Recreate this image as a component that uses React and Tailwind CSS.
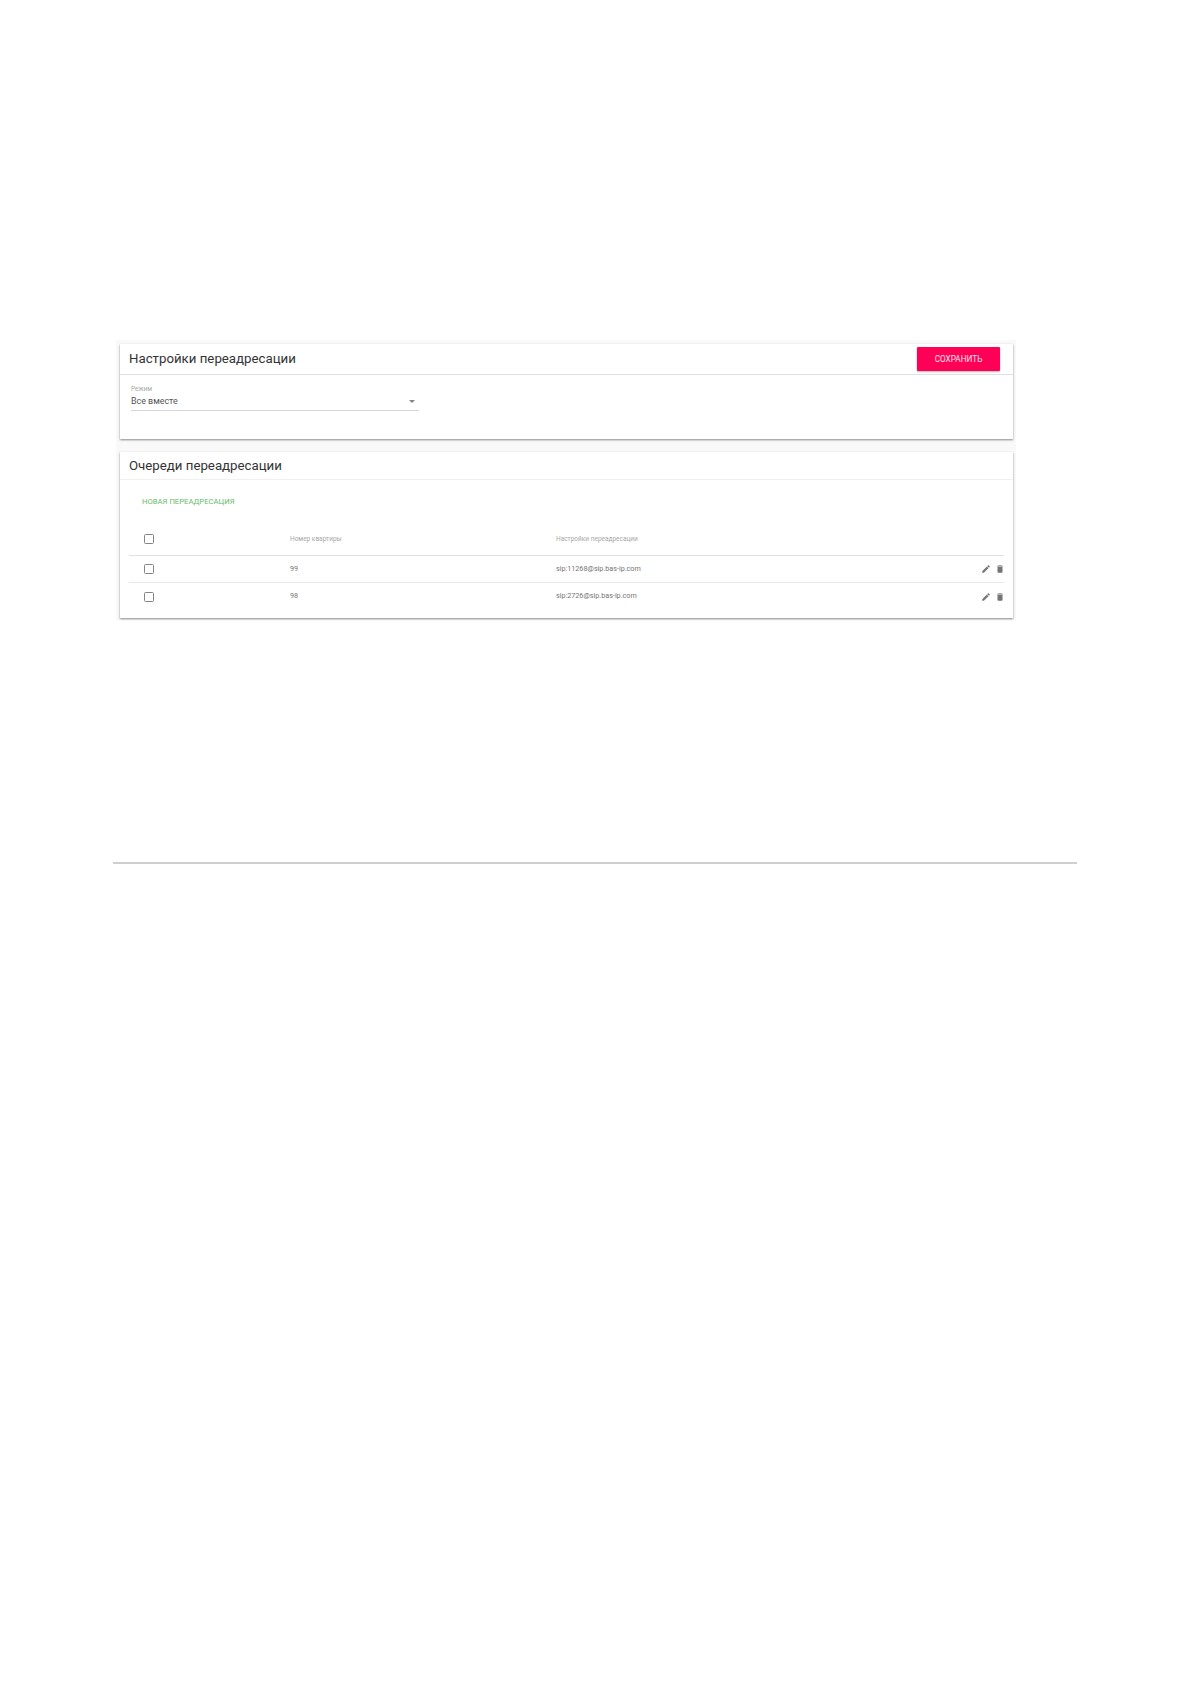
import React from 'react';

const rows = [
  { flat: '99', target: 'sip:11268@sip.bas-ip.com' },
  { flat: '98', target: 'sip:2726@sip.bas-ip.com' },
];

function Checkbox() {
  return <div className="w-[10px] h-[10px] rounded-[1.5px] border-[1.5px] border-[#858585]" />;
}

function EditIcon() {
  return (
    <svg viewBox="0 0 24 24" className="w-[10px] h-[10px]" fill="#757575">
      <path d="M3 17.25V21h3.75L17.81 9.94l-3.75-3.75L3 17.25zM20.71 7.04a1 1 0 0 0 0-1.41l-2.34-2.34a1 1 0 0 0-1.41 0l-1.83 1.83 3.75 3.75 1.83-1.83z" />
    </svg>
  );
}

function TrashIcon() {
  return (
    <svg viewBox="0 0 24 24" className="w-[10px] h-[10px]" fill="#757575">
      <path d="M6 19c0 1.1.9 2 2 2h8c1.1 0 2-.9 2-2V7H6v12zM19 4h-3.5l-1-1h-5l-1 1H5v2h14V4z" />
    </svg>
  );
}

export default function App() {
  return (
    <div className="min-h-[1684px] bg-white font-['Roboto',sans-serif] pt-[340px]">
      <div className="ml-[116px] w-[900px] h-[280px] bg-[#f9f9f9] pl-1 pr-[3px] pt-1">
        {/* Settings */}
        <div className="h-[95px] bg-white shadow-[0_1px_2px_rgba(0,0,0,0.45)]">
          <div className="h-[31px] flex items-center justify-between pl-[9px] pr-[13px] border-b border-[#e0e0e0]">
            <h2 className="text-[13.25px] font-normal text-[#333333]">Настройки переадресации</h2>
            <button
              type="button"
              className="w-[83px] h-[24px] bg-[#ff0057] text-[#ffe4ec] text-[8.2px] uppercase rounded-[1px] shadow-[0_1px_2px_rgba(0,0,0,0.3)]"
            >
              Сохранить
            </button>
          </div>
          <div className="ml-[11px] w-[288px] mt-[10px] border-b border-[#d6d6d6] h-[26px]">
            <div className="text-[6.5px] leading-[8px] text-[#a8a8a8]">Режим</div>
            <div className="flex items-center justify-between pr-[4px] h-[16px]">
              <span className="text-[8.9px] text-[#555555] pt-[2px]">Все вместе</span>
              <span className="w-0 h-0 border-x-[3px] border-x-transparent border-t-[3px] border-t-[#858585]" />
            </div>
          </div>
        </div>

        {/* Queues */}
        <div className="mt-[13px] h-[166px] bg-white shadow-[0_1px_2px_rgba(0,0,0,0.45)]">
          <div className="h-[28px] flex items-center pl-[9px] border-b border-[#f0f0f0]">
            <h2 className="text-[13.25px] font-normal text-[#333333]">Очереди переадресации</h2>
          </div>
          <div className="px-[9px]">
            <div className="pl-[13px] pt-[16px] h-[40px] text-[7.7px] leading-[11px] uppercase text-[#66bb6a]">
              Новая переадресация
            </div>
            <div className="grid grid-cols-[146px_266px_1fr_auto] items-center h-[36px] pt-[3px] border-b border-[#e0e0e0] pl-[15px] text-[6.5px] text-[#a8a8a8]">
              <Checkbox />
              <span className="pt-[2px]">Номер квартиры</span>
              <span className="pt-[2px]">Настройки переадресации</span>
            </div>
            {rows.map((row) => (
              <div
                key={row.flat}
                className="grid grid-cols-[146px_266px_1fr_auto] items-center h-[27px] border-b last:border-b-0 border-[#e8e8e8] pl-[15px] text-[7.2px] text-[#757575]"
              >
                <Checkbox />
                <span>{row.flat}</span>
                <span>{row.target}</span>
                <div className="flex items-center gap-[4px] -mr-px">
                  <EditIcon />
                  <TrashIcon />
                </div>
              </div>
            ))}
          </div>
        </div>
      </div>

      <div className="ml-[113px] mt-[242px] w-[964px] h-[2px] bg-[#cfcfcf]" />
    </div>
  );
}
